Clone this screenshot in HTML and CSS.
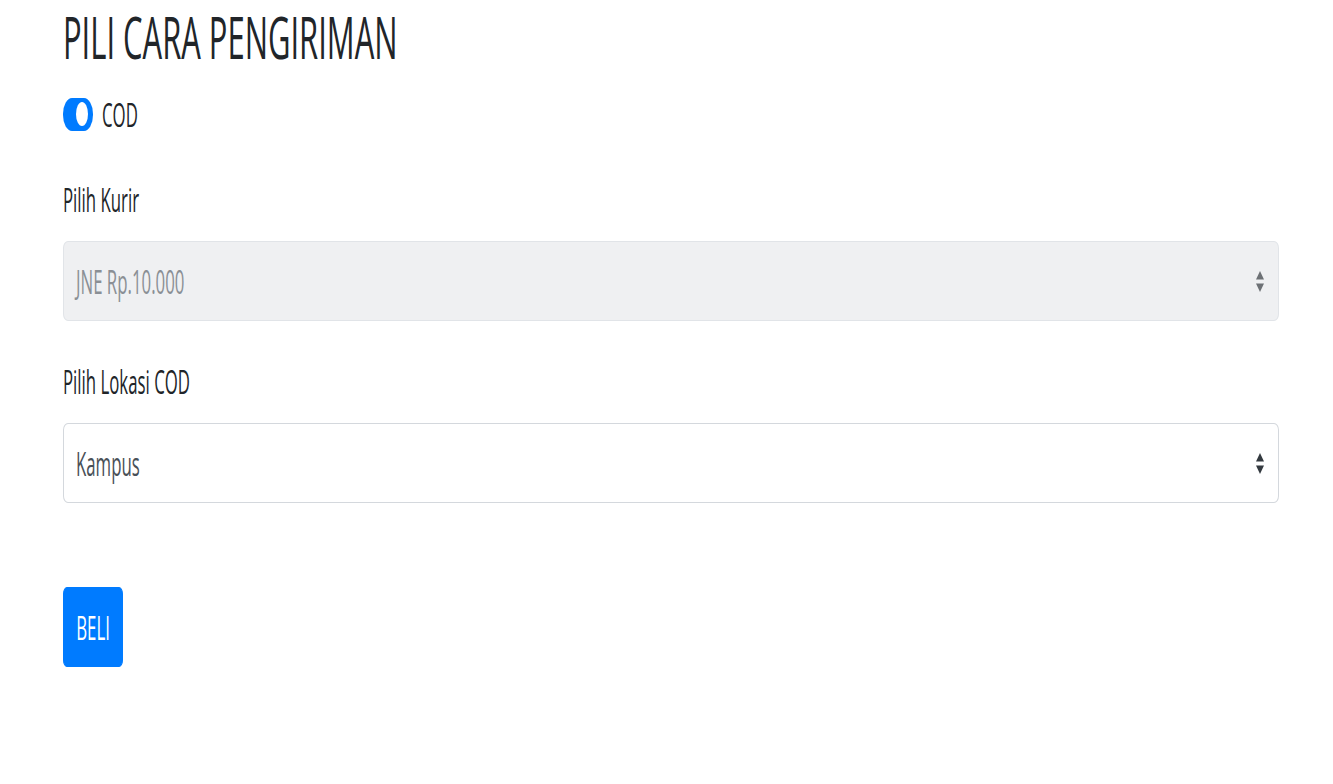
FILE: index.html
```html
<!DOCTYPE html>
<html lang="id">
<head>
<meta charset="utf-8">
<title>Pili Cara Pengiriman</title>
<link rel="stylesheet" href="styles.css">
</head>
<body>
<div class="page">
  <h3 class="title"><span class="tx tx-title">PILI CARA PENGIRIMAN</span></h3>
  <div class="switch">
    <span class="switch-track"><span class="switch-knob"></span></span>
    <span class="tx">COD</span>
  </div>
  <div class="form-group">
    <div class="label"><span class="tx">Pilih Kurir</span></div>
    <div class="select disabled">
      <span class="tx">JNE Rp.10.000</span>
      <svg class="arrows" width="8" height="21" viewBox="0 0 4 5" preserveAspectRatio="none"><path d="M2 0L0 2h4zm0 5L0 3h4z"/></svg>
    </div>
  </div>
  <div class="form-group">
    <div class="label"><span class="tx">Pilih Lokasi COD</span></div>
    <div class="select">
      <span class="tx">Kampus</span>
      <svg class="arrows" width="8" height="21" viewBox="0 0 4 5" preserveAspectRatio="none"><path d="M2 0L0 2h4zm0 5L0 3h4z"/></svg>
    </div>
  </div>
  <div class="actions">
    <button class="btn"><span class="tx tx-center">BELI</span></button>
  </div>
</div>
</body>
</html>
```

FILE: styles.css
```css
html, body {
  margin: 0;
  padding: 0;
  background: #fff;
}
body {
  font-family: "Segoe UI", "Open Sans", "Noto Sans", sans-serif;
  font-size: 16px;
  line-height: 24px;
  color: #212529;
}
.page {
  box-sizing: border-box;
  width: 1279px;
  min-height: 784px;
  padding-left: 63px;
}
/* the reference is stretched vertically: text glyphs are tall and narrow */
.tx {
  display: inline-block;
  white-space: nowrap;
  transform: scale(1.05, 2.1);
  transform-origin: left center;
}
.tx-center {
  transform-origin: center center;
}
.title {
  display: flex;
  align-items: center;
  height: 80px;
  margin: -4px 0 10px 0;
  font-size: 28px;
  font-weight: 500;
  line-height: 38px;
  color: #212529;
}
.tx-title {
  transform: scale(1.105, 2.1);
}
.switch {
  display: flex;
  align-items: center;
  height: 50px;
  gap: 9px;
  padding-top: 3px;
}
.switch-track {
  display: flex;
  align-items: center;
  justify-content: flex-end;
  box-sizing: border-box;
  width: 30px;
  height: 33px;
  padding: 0 5px;
  border-radius: 9px / 16px;
  background: #007bff;
}
.switch-knob {
  width: 12px;
  height: 24px;
  border-radius: 50%;
  background: #fff;
}
.form-group {
  margin-top: 35px;
}
.label {
  display: flex;
  align-items: center;
  height: 50px;
  margin-bottom: 17px;
}
.select {
  display: flex;
  align-items: center;
  justify-content: space-between;
  box-sizing: border-box;
  height: 80px;
  padding: 0 12px;
  border: 1px solid #d4d8dd;
  border-radius: 5px / 7px;
  background: #fff;
  color: #495057;
}
.select .arrows {
  fill: #343a40;
  margin-right: 2px;
}
.select.disabled {
  background: #eff0f2;
  border-color: #e1e4e8;
  color: #8a8f95;
}
.select.disabled .arrows {
  fill: #6d7175;
}
.actions {
  margin-top: 84px;
}
.btn {
  display: flex;
  align-items: center;
  justify-content: center;
  box-sizing: border-box;
  width: 60px;
  height: 80px;
  padding: 0;
  font-family: inherit;
  font-size: 16px;
  line-height: 24px;
  color: #fff;
  background: #007bff;
  border: 1px solid #007bff;
  border-radius: 4px / 7px;
  cursor: pointer;
}
```
